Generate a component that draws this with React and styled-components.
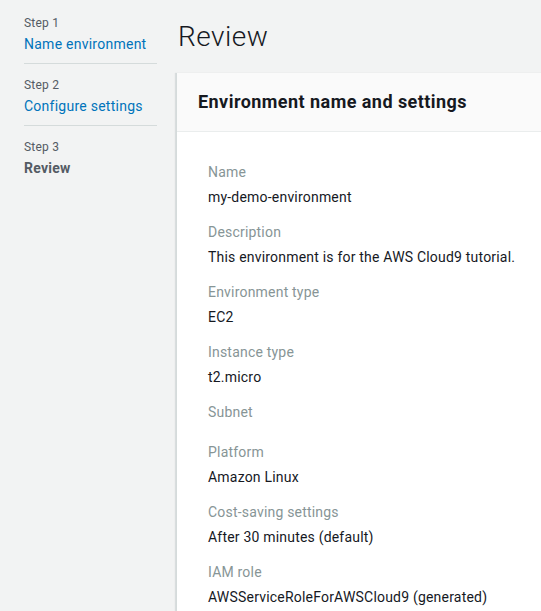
import React from "react";
import styled, { createGlobalStyle } from "styled-components";

const Global = createGlobalStyle`
  html, body { margin: 0; padding: 0; }
  body {
    background: #f2f3f3;
    font-family: Roboto, "Liberation Sans", Arial, sans-serif;
    color: #16191f;
    overflow: hidden;
    -webkit-font-smoothing: antialiased;
  }
`;

const Layout = styled.div`
  display: grid;
  grid-template-columns: 176px 1fr;
  width: 541px;
  height: 611px;
  overflow: hidden;
`;

const Nav = styled.nav`
  padding: 13px 19px 0 24px;
  display: flex;
  flex-direction: column;
`;

const StepItem = styled.div`
  padding: 1px 0 8px;
  border-bottom: ${(p) => (p.$last ? "none" : "1px solid #d5dbdb")};
  margin-bottom: 11px;
`;

const StepLabel = styled.div`
  font-size: 12px;
  line-height: 18px;
  color: #545b64;
  letter-spacing: 0.2px;
`;

const StepLink = styled.a`
  display: block;
  margin-top: 1px;
  font-size: 14px;
  line-height: 22px;
  letter-spacing: 0.25px;
  color: ${(p) => (p.$active ? "#545b64" : "#0073bb")};
  font-weight: ${(p) => (p.$active ? 700 : 400)};
  text-decoration: none;
`;

const Main = styled.main`
  min-width: 0;
  display: flex;
  flex-direction: column;
`;

const Title = styled.h1`
  margin: 0;
  padding: 17px 0 16px 2px;
  font-size: 28px;
  line-height: 40px;
  font-weight: 300;
  letter-spacing: 0.5px;
  color: #16191f;
`;

const Panel = styled.section`
  width: 600px;
  background: #ffffff;
  border-left: 1px solid #d5dbdb;
  box-shadow: -1px 0 1px rgba(0, 28, 36, 0.1);
  flex: 1;
`;

const PanelHeader = styled.header`
  background: #fafafa;
  border-bottom: 1px solid #eaeded;
  padding: 0 21px;
  height: 58px;
  display: flex;
  align-items: center;
`;

const PanelTitle = styled.h2`
  margin: 0;
  font-size: 18px;
  font-weight: 700;
  line-height: 24px;
  letter-spacing: 0.45px;
  color: #16191f;
`;

const PanelBody = styled.dl`
  margin: 0;
  padding: 30px 31px;
  display: flex;
  flex-direction: column;
  gap: 15px;
`;

const Field = styled.div`
  display: flex;
  flex-direction: column;
  gap: 5px;
`;

const Label = styled.dt`
  font-size: 14px;
  line-height: 20px;
  letter-spacing: 0.2px;
  color: #879596;
`;

const Value = styled.dd`
  margin: 0;
  font-size: 14px;
  line-height: 20px;
  letter-spacing: 0.2px;
  color: #16191f;
`;

const steps = [
  { step: "Step 1", name: "Name environment" },
  { step: "Step 2", name: "Configure settings" },
  { step: "Step 3", name: "Review", active: true },
];

const fields = [
  ["Name", "my-demo-environment"],
  ["Description", "This environment is for the AWS Cloud9 tutorial."],
  ["Environment type", "EC2"],
  ["Instance type", "t2.micro"],
  ["Subnet", ""],
  ["Platform", "Amazon Linux"],
  ["Cost-saving settings", "After 30 minutes (default)"],
  ["IAM role", "AWSServiceRoleForAWSCloud9 (generated)"],
];

export default function App() {
  return (
    <>
      <Global />
      <Layout>
        <Nav>
          {steps.map((s, i) => (
            <StepItem key={s.step} $last={i === steps.length - 1}>
              <StepLabel>{s.step}</StepLabel>
              <StepLink href="#" $active={s.active}>
                {s.name}
              </StepLink>
            </StepItem>
          ))}
        </Nav>
        <Main>
          <Title>Review</Title>
          <Panel>
            <PanelHeader>
              <PanelTitle>Environment name and settings</PanelTitle>
            </PanelHeader>
            <PanelBody>
              {fields.map(([l, v]) => (
                <Field key={l}>
                  <Label>{l}</Label>
                  <Value>{v}</Value>
                </Field>
              ))}
            </PanelBody>
          </Panel>
        </Main>
      </Layout>
    </>
  );
}
